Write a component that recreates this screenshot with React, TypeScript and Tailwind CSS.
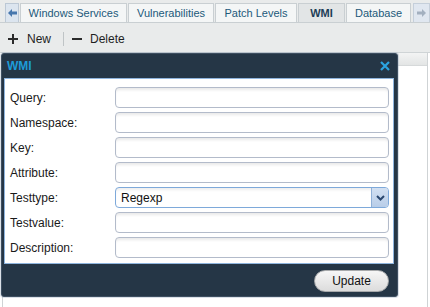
import React from "react";

const font = { fontFamily: '"Liberation Sans", Arial, sans-serif' };

function Tab({ label, w, active }: { label: string; w: string; active?: boolean }) {
  return (
    <div
      className={`${w} h-[19px] flex items-center justify-center border border-b-0 border-[#c9cfd2] text-[11px] ${
        active ? "bg-[#e2e5e6] font-bold text-[#1d3d57]" : "bg-[#f4f6f6] text-[#22597a]"
      }`}
    >
      {label}
    </div>
  );
}

function Field({ label }: { label: string }) {
  return (
    <div className="flex items-center h-[21px]">
      <div className="w-[110px] text-[12px] text-[#1a1a1a] pl-[5px]">{label}</div>
      <div className="w-[274px] h-[21px] rounded-[4px] border border-[#b3bbca] bg-white shadow-[inset_0_3px_3px_-1px_rgba(0,0,0,0.09)]" />
    </div>
  );
}

export default function App() {
  return (
    <div className="w-[430px] h-[307px] bg-white flex flex-col overflow-hidden" style={font}>
      {/* Tab bar */}
      <div className="h-[23px] bg-[#e9ebeb] flex items-end pl-[5px] gap-[1px] border-b border-[#c9cfd2]">
        <div className="w-[14px] h-[19px] flex items-center justify-center bg-[#dce5ef] border border-b-0 border-[#bcc8d5]">
          <svg width="9" height="8" viewBox="0 0 9 8">
            <path d="M0 4 L4 0 L4 2.5 L9 2.5 L9 5.5 L4 5.5 L4 8 Z" fill="#4777ad" />
          </svg>
        </div>
        <Tab label="Windows Services" w="w-[107px]" />
        <Tab label="Vulnerabilities" w="w-[86px]" />
        <Tab label="Patch Levels" w="w-[82px]" />
        <Tab label="WMI" w="w-[47px]" active />
        <Tab label="Database" w="w-[65px]" />
        <div className="ml-[1px] w-[17px] h-[19px] flex items-center justify-center bg-[#e0e7f0] border border-b-0 border-[#c5cfda]">
          <svg width="9" height="8" viewBox="0 0 9 8">
            <path d="M9 4 L5 0 L5 2.5 L0 2.5 L0 5.5 L5 5.5 L5 8 Z" fill="#a3b0bf" />
          </svg>
        </div>
      </div>

      {/* Toolbar */}
      <div className="h-[29px] bg-[#e9ebeb] flex items-center pl-[8px] text-[12px] text-[#1e1e1e] pt-[2px]">
        <div className="flex items-center gap-[9px]">
          <svg width="10" height="10" viewBox="0 0 10 10">
            <path d="M5 0 V10 M0 5 H10" stroke="#2b2b2b" strokeWidth="2" />
          </svg>
          <span>New</span>
        </div>
        <div className="ml-[12px] w-[1px] h-[14px] bg-[#bfc4c6]" />
        <div className="ml-[8px] flex items-center gap-[8px]">
          <svg width="10" height="10" viewBox="0 0 10 10">
            <path d="M0 5 H10" stroke="#2b2b2b" strokeWidth="2" />
          </svg>
          <span>Delete</span>
        </div>
      </div>

      {/* Content area with background grid and dialog */}
      <div className="relative flex-1 border-t border-[#cfd4d6] px-[2px]">
        <div className="h-full border-l border-r border-[#cfd3d5] flex flex-col">
          <div className="h-[13px] bg-gradient-to-b from-[#f3f4f4] to-[#e3e5e5] border-b border-[#d6d9da]" />
        </div>

        {/* Dialog */}
        <div className="absolute left-[1px] top-0 w-[397px] h-[244px] bg-[#253646] rounded-[3px] border border-[#3e4f61] shadow-[0_0_0_1px_rgba(150,165,185,0.35)] flex flex-col">
          <div className="h-[24px] flex items-center justify-between pl-[5px] pr-[7px]">
            <span className="text-[12px] font-bold text-[#1d9bd8]">WMI</span>
            <svg width="10" height="10" viewBox="0 0 10 10">
              <path d="M1 1 L9 9 M9 1 L1 9" stroke="#2ba4e0" strokeWidth="2.2" />
            </svg>
          </div>
          <div className="mx-[2px] mr-[3px] h-[186px] bg-white border border-[#8fb5de] pt-[8px] flex flex-col gap-[4px]">
            <Field label="Query:" />
            <Field label="Namespace:" />
            <Field label="Key:" />
            <Field label="Attribute:" />
            <div className="flex items-center h-[21px]">
              <div className="w-[110px] text-[12px] text-[#1a1a1a] pl-[5px]">Testtype:</div>
              <div className="w-[274px] h-[21px] rounded-[4px] border border-[#7ea9da] bg-white shadow-[inset_0_3px_3px_-1px_rgba(0,0,0,0.07)] flex items-center overflow-hidden">
                <span className="flex-1 pl-[5px] text-[12px] text-[#111]">Regexp</span>
                <div className="w-[17px] h-full bg-gradient-to-b from-[#d2e0f2] to-[#b8cde8] border-l border-[#8fb0d8] flex items-center justify-center">
                  <svg width="9" height="6" viewBox="0 0 9 6">
                    <path d="M1 1 L4.5 4.5 L8 1" stroke="#2b4870" strokeWidth="2" fill="none" />
                  </svg>
                </div>
              </div>
            </div>
            <Field label="Testvalue:" />
            <Field label="Description:" />
          </div>
          <div className="flex-1 flex justify-end items-start pt-[6px] pr-[8px]">
            <button className="w-[75px] h-[22px] rounded-full border border-[#a7a9ab] bg-gradient-to-b from-[#f6f6f6] to-[#dcdcdc] text-[12px] text-[#111]">
              Update
            </button>
          </div>
        </div>
      </div>
    </div>
  );
}
